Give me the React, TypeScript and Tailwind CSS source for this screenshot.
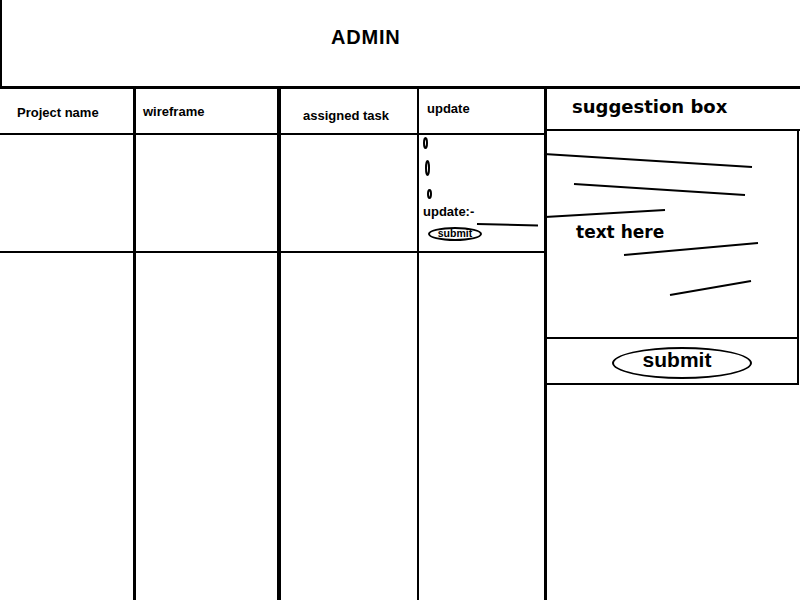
const scribbles = [
  { x1: -3, y1: 23, x2: 205, y2: 36 },
  { x1: 27, y1: 53, x2: 198, y2: 64 },
  { x1: -2, y1: 86, x2: 118, y2: 79 },
  { x1: 77, y1: 124, x2: 211, y2: 112 },
  { x1: 123, y1: 164, x2: 204, y2: 150 },
]

function UpdateCell() {
  return (
    <div className="relative h-[118px] border-b-2 border-black">
      {/* radio-ish ovals */}
      <svg className="ml-[3px] mt-[1px] block" width="14" height="68">
        <ellipse cx="3.5" cy="7" rx="1.5" ry="5" fill="none" stroke="#000" strokeWidth="2" />
        <ellipse cx="5.5" cy="32" rx="1.5" ry="7" fill="none" stroke="#000" strokeWidth="2" />
        <ellipse cx="7.5" cy="58" rx="1.5" ry="4" fill="none" stroke="#000" strokeWidth="2" />
      </svg>
      <p className="pl-[4px] text-[13px] leading-4">update:-</p>
      <div className="ml-[9px] mt-[7px] flex h-[14px] w-[54px] items-center justify-center rounded-[50%] border-2 border-black pb-[3px]">
        <span className="text-[10.5px] leading-[10px]">submit</span>
      </div>
      <svg className="pointer-events-none absolute inset-0 overflow-visible" width="125" height="118">
        <line x1="58" y1="89" x2="119" y2="90.5" stroke="#000" strokeWidth="2" />
      </svg>
    </div>
  )
}

export default function App() {
  return (
    <div className="h-[600px] w-[800px] overflow-hidden bg-white font-['Liberation_Sans',Arial,sans-serif] font-bold text-black">
      {/* Title */}
      <header className="h-[86px] border-l-2 border-black pl-[329px] pt-[25px] text-[20px] leading-[24px] tracking-[0.8px]">
        ADMIN
      </header>

      <main className="flex h-[514px] border-t-[3px] border-black">
        {/* Project name */}
        <div className="flex w-[136px] flex-col border-r-[3px] border-black">
          <div className="h-[46px] border-b-2 border-black pl-[17px] pt-[16px] text-[13px] leading-4">
            Project name
          </div>
          <div className="h-[118px] border-b-2 border-black" />
        </div>

        {/* wireframe */}
        <div className="flex w-[145px] flex-col border-r-4 border-black">
          <div className="h-[46px] border-b-2 border-black pl-[7px] pt-[15px] text-[13px] leading-4">
            wireframe
          </div>
          <div className="h-[118px] border-b-2 border-black" />
        </div>

        {/* assigned task */}
        <div className="flex w-[138px] flex-col border-r-2 border-black">
          <div className="h-[46px] border-b-2 border-black pl-[22px] pt-[19px] text-[13px] leading-4">
            assigned task
          </div>
          <div className="h-[118px] border-b-2 border-black" />
        </div>

        {/* update */}
        <div className="flex w-[128px] flex-col border-r-[3px] border-black">
          <div className="h-[46px] border-b-2 border-black pl-[8px] pt-[12px] text-[13px] leading-4">
            update
          </div>
          <UpdateCell />
        </div>

        {/* Suggestion box */}
        <div className="flex w-[253px] flex-col">
          <div className="h-[42px] border-b-2 border-black pl-[25px] pt-[7px] font-['DejaVu_Sans',sans-serif] text-[18px] leading-[22px]">
            suggestion box
          </div>
          <div className="relative h-[208px] w-[252px] border-b-2 border-r-2 border-black pl-[29px] pt-[91px] font-['DejaVu_Sans',sans-serif] text-[17px] leading-[20px]">
            text here
            <svg className="pointer-events-none absolute inset-0 overflow-visible" width="252" height="208">
              {scribbles.map((l, i) => (
                <line key={i} {...l} stroke="#000" strokeWidth="2" />
              ))}
            </svg>
          </div>
          <div className="h-[46px] w-[252px] border-b-2 border-r-2 border-black pl-[65px] pt-[8px]">
            <div className="flex h-[32px] w-[140px] items-center justify-center rounded-[50%] border-2 border-black pb-[7px] pr-[10px]">
              <span className="text-[21px] leading-[24px]">submit</span>
            </div>
          </div>
        </div>
      </main>
    </div>
  )
}
